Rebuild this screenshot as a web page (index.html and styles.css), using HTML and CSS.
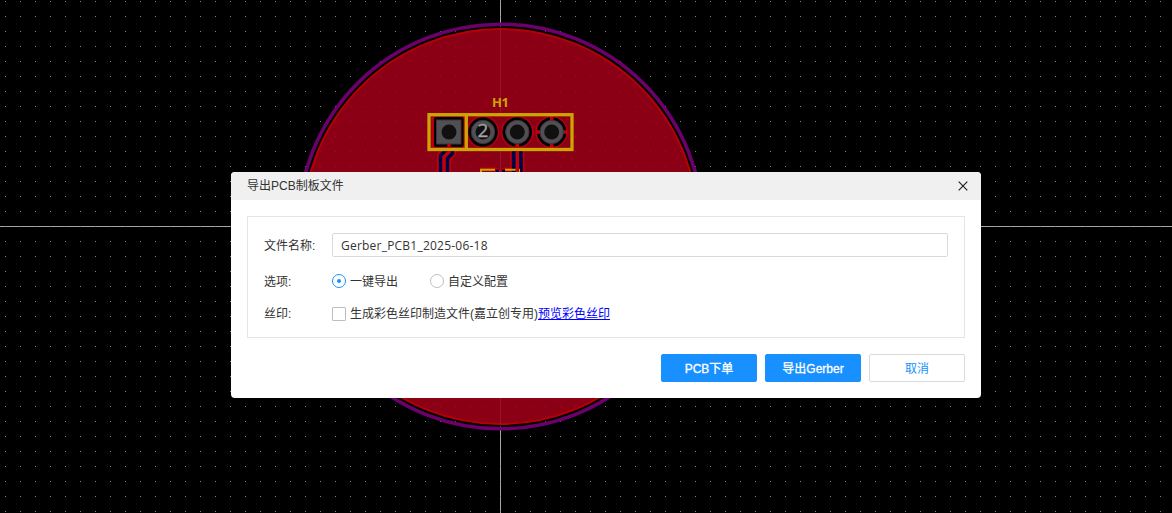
FILE: index.html
```html
<!DOCTYPE html>
<html lang="zh-CN">
<head>
<meta charset="utf-8">
<title>导出PCB制板文件</title>
<link rel="stylesheet" href="styles.css">
</head>
<body>
<svg class="canvas" width="1172" height="513" viewBox="0 0 1172 513">
  <defs>
    <pattern id="grid" x="0" y="0" width="15" height="15" patternUnits="userSpaceOnUse"><rect x="5" y="1" width="1" height="1" fill="#858585"/></pattern>
    <pattern id="board-grid" x="0" y="0" width="15" height="15" patternUnits="userSpaceOnUse"><rect x="5" y="1" width="1" height="1" fill="#9d1125"/></pattern>
  </defs>
  <rect width="1172" height="513" fill="#000"/>
  <path d="M0 226.500H1172M500.500 0V513" stroke="#a6a6a6"/>
  <rect width="1172" height="513" fill="url(#grid)"/>
  <circle cx="500.500" cy="226.500" r="200" fill="#000"/>
  <circle cx="500.500" cy="226.500" r="197.500" fill="#8c0016" stroke="#b50008" stroke-width="2"/>
  <circle cx="500.500" cy="226.500" r="196" fill="url(#board-grid)"/>
  <path d="M500.500 28V425" stroke="#9b1428"/>
  <circle cx="500.500" cy="226.500" r="202.300" fill="none" stroke="#6c006c" stroke-width="3.500"/>
  <g fill="none">
    <path d="M449 147V152L444 157V175" stroke="#c00008" stroke-width="14"/>
    <path d="M449 147V152L444 157V175" stroke="#000048" stroke-width="10.500"/>
    <path d="M517.300 147V175" stroke="#c00008" stroke-width="14"/>
    <path d="M517.300 147V175" stroke="#000048" stroke-width="11"/>
    <path d="M480 168.500H496L500 171L504 168.500H510" stroke="#c00008" stroke-width="2"/>
    <path d="M481 175V169.800H495M505 169.800H519V175" stroke="#cda400" stroke-width="2"/>
    <path d="M496 171H499M502 171H505" stroke="#000048" stroke-width="3"/>
  </g>
  <rect x="429" y="115" width="143" height="35" fill="#8c0016"/>
  <rect x="431.500" y="116.500" width="34" height="32" fill="#b80010"/>
  <rect x="434" y="117" width="29.500" height="30" rx="2" fill="#000"/>
  <rect x="436.500" y="120" width="24.500" height="24" fill="#505050" stroke="#42304c"/>
  <g fill="#000" stroke="#b80010" stroke-width="1.500">
    <circle cx="483" cy="132" r="15.500"/><circle cx="517.300" cy="132" r="15.500"/><circle cx="551.700" cy="132" r="15.500"/>
  </g>
  <path d="M536 132H567M551.700 116V148" stroke="#c40008" stroke-width="3.500"/>
  <g fill="#505050" stroke="#42304c">
    <circle cx="483" cy="132" r="11.700"/><circle cx="517.300" cy="132" r="11.700"/><circle cx="551.700" cy="132" r="11.700"/>
  </g>
  <g fill="#101010"><circle cx="449" cy="132" r="7.500"/><circle cx="483" cy="132" r="7.500"/><circle cx="517.300" cy="132" r="7.500"/><circle cx="551.700" cy="132" r="7.500"/></g>
  <rect x="429" y="114.700" width="143" height="34.800" fill="none" stroke="#cda400" stroke-width="3.300"/>
  <path d="M466.300 115V149" stroke="#cda400" stroke-width="3.300"/>
  <path d="M449 144V148M517.300 144V148M449 151V152L444 157V175M517.300 151V175" fill="none" stroke="#c40008" stroke-width="3.500"/>
  <text class="designator" x="492" y="106.500" textLength="17">H1</text>
  <text class="pad-number" x="477.500" y="137">2</text>
</svg>
<main class="dialog">
  <header class="title-bar">
    <span>导出PCB制板文件</span>
    <svg class="close" width="10" height="10" viewBox="0 0 10 10"><path d="M.7.7l8.600 8.600M9.300.7L.7 9.300"/></svg>
  </header>
  <section class="options">
    <div class="row name-row"><label class="label" for="filename">文件名称:</label><input id="filename" class="filename" value="Gerber_PCB1_2025-06-18"></div>
    <div class="row choice-row">
      <span class="label">选项:</span>
      <span class="choice first"><i class="radio selected"></i><span class="caption">一键导出</span></span>
      <span class="choice"><i class="radio"></i><span class="caption">自定义配置</span></span>
    </div>
    <div class="row silk-row"><span class="label">丝印:</span><span class="choice"><i class="checkbox"></i><span class="caption">生成彩色丝印制造文件(嘉立创专用)</span></span><a class="preview" href="#">预览彩色丝印</a></div>
  </section>
  <footer class="actions"><button class="button primary">PCB下单</button><button class="button primary">导出Gerber</button><button class="button">取消</button></footer>
</main>
</body>
</html>
```
FILE: styles.css
```css
* { box-sizing: border-box; }
body {
  margin: 0;
  width: 1172px;
  height: 513px;
  overflow: hidden;
  background: #000;
  color: #333;
  font: 12px "Liberation Sans", "Noto Sans CJK SC", sans-serif;
}
.canvas { display: block; }
.designator { font: 700 13px "Open Sans", sans-serif; fill: #cda400; }
.pad-number { font: 19px "Open Sans", sans-serif; fill: #a5a5a5; stroke: #a5a5a5; stroke-width: .3px; }
.dialog {
  position: absolute;
  left: 231px;
  top: 172px;
  width: 750px;
  height: 226px;
  background: #fff;
  border-radius: 4px;
  overflow: hidden;
}
.title-bar {
  height: 28px;
  padding: 0 13px 0 16px;
  display: flex;
  align-items: center;
  justify-content: space-between;
  background: #f0f0f0;
  line-height: 28px;
}
.close { fill: none; stroke: #222; stroke-width: 1.2; }
.options {
  height: 122px;
  margin: 16px 16px 0;
  padding: 16px;
  border: 1px solid #e5e5e5;
}
.row { display: flex; align-items: center; height: 24px; white-space: nowrap; }
.label, .caption, .preview { padding-bottom: 2px; }
.label { width: 68px; flex: none; }
.filename {
  width: 616px;
  height: 24px;
  padding: 0 8px;
  border: 1px solid #d9d9d9;
  border-radius: 2px;
  color: #333;
  font: 12px "Open Sans", "Noto Sans CJK SC", sans-serif;
  letter-spacing: .22px;
}
.choice-row { margin-top: 12px; }
.silk-row { margin-top: 8px; }
.choice { display: flex; align-items: center; gap: 4px; }
.choice.first { width: 98px; }
.radio, .checkbox { width: 14px; height: 14px; border: 1px solid #bfbfbf; }
.radio { border-radius: 50%; display: grid; place-items: center; }
.radio.selected { border-color: #1890ff; }
.radio.selected::after { content: ""; width: 4px; height: 4px; border-radius: 50%; background: #1890ff; }
.checkbox { border-radius: 1px; margin-top: 2px; }
.preview { color: #00f; text-decoration: underline; }
.actions { display: flex; justify-content: flex-end; gap: 8px; padding: 16px 16px 0; }
.button {
  width: 96px;
  height: 28px;
  padding: 0 0 2px;
  border: 1px solid #d9d9d9;
  border-radius: 2px;
  background: #fff;
  color: #1890ff;
  font: 12px "Liberation Sans", "Noto Sans CJK SC", sans-serif;
}
.primary { border-color: #1890ff; background: #1890ff; color: #fff; -webkit-text-stroke: .3px #fff; }
```
